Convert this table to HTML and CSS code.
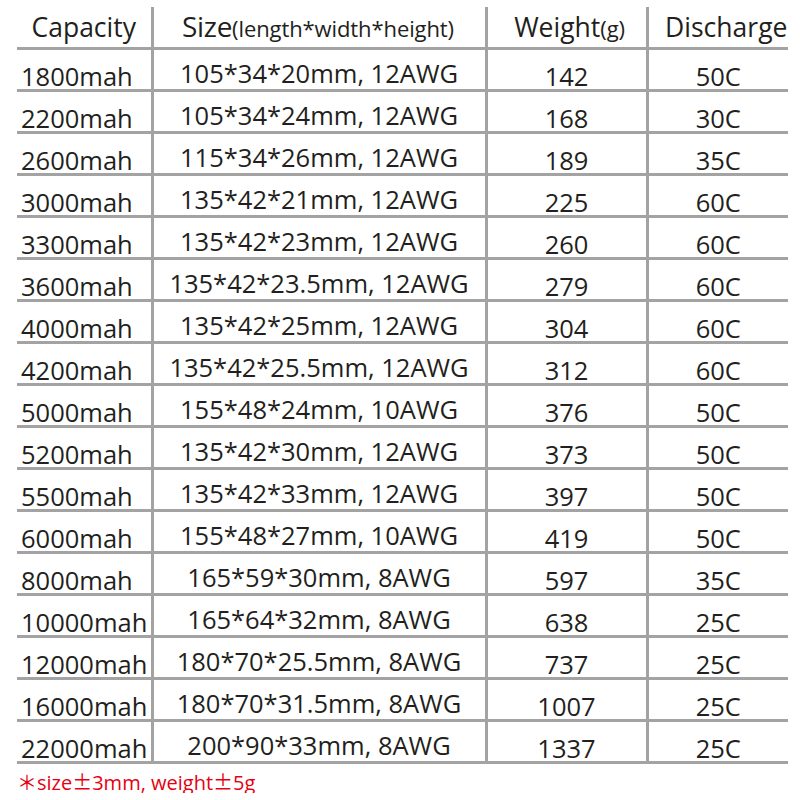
FILE: index.html
```html
<!DOCTYPE html>
<html lang="en">
<head>
<meta charset="utf-8">
<title>Battery specifications</title>
<link rel="stylesheet" href="styles.css">
</head>
<body>
<div class="sheet">
  <table class="spec">
    <colgroup>
      <col class="w1"><col class="w2"><col class="w3"><col class="w4">
    </colgroup>
    <thead>
      <tr>
        <th class="h1">Capacity</th>
        <th class="h2"><span class="main">Size</span><span class="sub">(length*width*height)</span></th>
        <th class="h3">Weight<span class="sub">(g)</span></th>
        <th class="h4">Discharge</th>
      </tr>
    </thead>
    <tbody>
      <tr><td class="cap">1800mah</td><td class="size">105*34*20mm, 12AWG</td><td class="num">142</td><td class="num">50C</td></tr>
      <tr><td class="cap">2200mah</td><td class="size">105*34*24mm, 12AWG</td><td class="num">168</td><td class="num">30C</td></tr>
      <tr><td class="cap">2600mah</td><td class="size">115*34*26mm, 12AWG</td><td class="num">189</td><td class="num">35C</td></tr>
      <tr><td class="cap">3000mah</td><td class="size">135*42*21mm, 12AWG</td><td class="num">225</td><td class="num">60C</td></tr>
      <tr><td class="cap">3300mah</td><td class="size">135*42*23mm, 12AWG</td><td class="num">260</td><td class="num">60C</td></tr>
      <tr><td class="cap">3600mah</td><td class="size">135*42*23.5mm, 12AWG</td><td class="num">279</td><td class="num">60C</td></tr>
      <tr><td class="cap">4000mah</td><td class="size">135*42*25mm, 12AWG</td><td class="num">304</td><td class="num">60C</td></tr>
      <tr><td class="cap">4200mah</td><td class="size">135*42*25.5mm, 12AWG</td><td class="num">312</td><td class="num">60C</td></tr>
      <tr><td class="cap">5000mah</td><td class="size">155*48*24mm, 10AWG</td><td class="num">376</td><td class="num">50C</td></tr>
      <tr><td class="cap">5200mah</td><td class="size">135*42*30mm, 12AWG</td><td class="num">373</td><td class="num">50C</td></tr>
      <tr><td class="cap">5500mah</td><td class="size">135*42*33mm, 12AWG</td><td class="num">397</td><td class="num">50C</td></tr>
      <tr><td class="cap">6000mah</td><td class="size">155*48*27mm, 10AWG</td><td class="num">419</td><td class="num">50C</td></tr>
      <tr><td class="cap">8000mah</td><td class="size">165*59*30mm, 8AWG</td><td class="num">597</td><td class="num">35C</td></tr>
      <tr><td class="cap">10000mah</td><td class="size">165*64*32mm, 8AWG</td><td class="num">638</td><td class="num">25C</td></tr>
      <tr><td class="cap">12000mah</td><td class="size">180*70*25.5mm, 8AWG</td><td class="num">737</td><td class="num">25C</td></tr>
      <tr><td class="cap">16000mah</td><td class="size">180*70*31.5mm, 8AWG</td><td class="num">1007</td><td class="num">25C</td></tr>
      <tr><td class="cap">22000mah</td><td class="size">200*90*33mm, 8AWG</td><td class="num">1337</td><td class="num">25C</td></tr>
    </tbody>
  </table>
  <p class="note"><span class="star">＊</span>size<span class="pm">±</span>3mm, weight<span class="pm">±</span>5g</p>
</div>
</body>
</html>
```

FILE: styles.css
```css
html, body {
  margin: 0;
  padding: 0;
  background: #ffffff;
}

body {
  font-family: "Open Sans", "Noto Sans", sans-serif;
  color: #231f20;
}

.sheet {
  padding: 7px 0 0 17px;
}

.spec {
  border-collapse: collapse;
  table-layout: fixed;
  width: 771px;
}

.w1 { width: 135px; }
.w2 { width: 334px; }
.w3 { width: 161px; }
.w4 { width: 141px; }

.spec th,
.spec td {
  padding: 0;
  border-bottom: 3px solid #a3a3a3;
  white-space: nowrap;
  vertical-align: bottom;
}

.spec th + th,
.spec td + td {
  border-left: 3px solid #a3a3a3;
}

.spec thead tr {
  height: 41px;
}

.spec th {
  font-weight: 500;
  font-size: 26.5px;
  line-height: 1;
  text-align: center;
  padding-bottom: 6px;
}

.spec th .main {
  font-size: 28px;
  font-weight: 500;
  letter-spacing: -0.3px;
}

.spec th .sub {
  font-size: 22px;
  font-weight: normal;
  letter-spacing: -0.1px;
}

.spec th.h2 {
  padding-right: 2px;
}

.spec th.h3 {
  padding-left: 6px;
}

.spec th.h4 {
  padding-left: 16px;
}

.spec tbody tr {
  height: 42px;
}

.spec td {
  font-size: 25.5px;
  line-height: 25px;
  text-align: center;
  padding-bottom: 0;
}

.spec td.cap {
  text-align: left;
  padding-left: 4px;
}

.spec td.size {
  padding-bottom: 3px;
}

.note {
  margin: 8px 0 0 0;
  color: #e60012;
  font-size: 20px;
  line-height: 1;
}

.note .star,
.note .pm {
  font-family: "Noto Sans CJK SC", sans-serif;
}
```
